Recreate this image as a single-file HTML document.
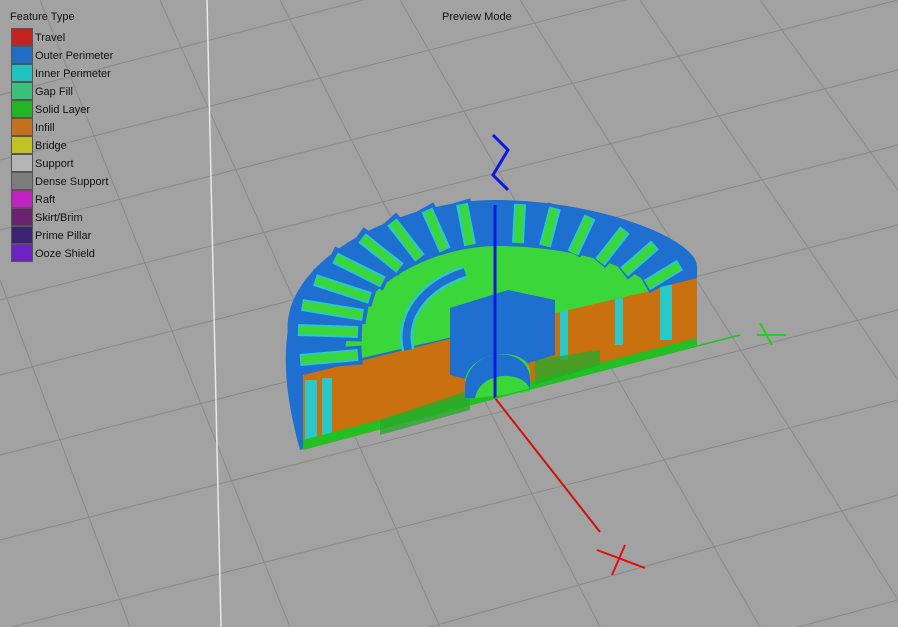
<!DOCTYPE html>
<html style="overflow:hidden"><head><style>
html,body{margin:0;width:898px;height:627px;overflow:hidden}
body{background:#a2a2a2;font-family:"Liberation Sans",sans-serif;position:relative}
svg{position:absolute;left:0;top:0;display:block}
.t{position:absolute;font-size:11px;color:#111;white-space:nowrap}
.sw{position:absolute;left:11px;width:20px;height:16px;border:1px solid #555}
</style></head><body>
<svg width="898" height="627" viewBox="0 0 898 627">
<g stroke="#8a8a8a" stroke-width="1" fill="none">
<line x1="0" y1="95" x2="898" y2="-140"/>
<line x1="0" y1="160" x2="898" y2="-70"/>
<line x1="0" y1="230" x2="898" y2="0"/>
<line x1="0" y1="300" x2="898" y2="70"/>
<line x1="0" y1="375" x2="898" y2="145"/>
<line x1="0" y1="455" x2="898" y2="225"/>
<line x1="0" y1="540" x2="898" y2="310"/>
<line x1="0" y1="630" x2="898" y2="400"/>
<line x1="100" y1="720" x2="898" y2="495"/>
<line x1="380" y1="740" x2="898" y2="600"/>
<line x1="-60" y1="120" x2="130" y2="627"/>
<line x1="40" y1="0" x2="290" y2="627"/>
<line x1="160" y1="0" x2="440" y2="627"/>
<line x1="280" y1="0" x2="600" y2="627"/>
<line x1="400" y1="0" x2="760" y2="627"/>
<line x1="520" y1="0" x2="898" y2="600"/>
<line x1="640" y1="0" x2="898" y2="380"/>
<line x1="760" y1="0" x2="898" y2="190"/>
</g>
<line x1="207" y1="0" x2="221" y2="627" stroke="#e8e8e8" stroke-width="1.5"/>
<path d="M288,330 C283,360 286,400 300,450 L697,345 L697,268 Z" fill="#1f6fd0"/>
<path d="M303,375 L697,278 L697,345 L303,450 Z" fill="#c9700f"/>
<g fill="#2ac8c8">
<rect x="305" y="380" width="12" height="65"/><rect x="322" y="378" width="10" height="62"/>
<rect x="560" y="305" width="8" height="55"/><rect x="660" y="285" width="12" height="55"/><rect x="615" y="295" width="8" height="50"/>
</g>
<path d="M303,440 L697,338 L697,345 L303,450 Z" fill="#22c022"/>
<path d="M380,420 L470,390 L470,410 L380,435Z M535,360 L600,350 L600,365 L535,385Z" fill="#2aaa2a" opacity="0.8"/>
<path d="M288,335 C280,260 400,200 495,200 C600,200 700,240 697,268 L697,278 L303,375 C295,360 290,350 288,335Z" fill="#1f6fd0"/>
<path d="M345,355 C345,295 420,248 495,246 C580,246 640,270 655,290 L345,362 Z" fill="#3ad63a"/>
<g id="fins" stroke-linecap="butt">
<g stroke="#1f6fd0" stroke-width="19">
<line x1="296" y1="360" x2="362" y2="355"/><line x1="294" y1="330" x2="362" y2="332"/><line x1="298" y1="303" x2="367" y2="315"/><line x1="311" y1="278" x2="374" y2="298"/><line x1="331" y1="255" x2="387" y2="282"/><line x1="358" y1="235" x2="404" y2="268"/><line x1="389" y1="219" x2="424" y2="258"/><line x1="425" y1="207" x2="449" y2="250"/><line x1="461" y1="201" x2="474" y2="245"/><line x1="520" y1="201" x2="518" y2="243"/><line x1="557" y1="205" x2="545" y2="246"/><line x1="593" y1="214" x2="572" y2="253"/><line x1="628" y1="227" x2="598" y2="262"/><line x1="659" y1="243" x2="622" y2="272"/><line x1="684" y1="263" x2="645" y2="285"/>
</g>
<g stroke="#2ac8c8" stroke-width="12">
<line x1="300" y1="360" x2="358" y2="355"/><line x1="298" y1="330" x2="358" y2="332"/><line x1="302" y1="305" x2="363" y2="315"/><line x1="315" y1="280" x2="370" y2="298"/><line x1="335" y1="258" x2="383" y2="282"/><line x1="362" y1="238" x2="400" y2="268"/><line x1="392" y1="222" x2="420" y2="258"/><line x1="427" y1="210" x2="445" y2="250"/><line x1="462" y1="204" x2="470" y2="245"/><line x1="520" y1="204" x2="518" y2="243"/><line x1="555" y1="208" x2="545" y2="246"/><line x1="590" y1="217" x2="573" y2="253"/><line x1="625" y1="230" x2="600" y2="262"/><line x1="655" y1="245" x2="624" y2="272"/><line x1="680" y1="265" x2="647" y2="285"/>
</g>
<g stroke="#3ad63a" stroke-width="8">
<line x1="301" y1="360" x2="357" y2="355"/><line x1="299" y1="330" x2="357" y2="332"/><line x1="303" y1="305" x2="362" y2="315"/><line x1="316" y1="280" x2="369" y2="298"/><line x1="336" y1="258" x2="382" y2="282"/><line x1="363" y1="238" x2="399" y2="268"/><line x1="393" y1="222" x2="419" y2="258"/><line x1="428" y1="211" x2="444" y2="250"/><line x1="463" y1="205" x2="470" y2="245"/><line x1="520" y1="205" x2="518" y2="243"/><line x1="554" y1="209" x2="545" y2="246"/><line x1="589" y1="218" x2="573" y2="253"/><line x1="624" y1="231" x2="600" y2="262"/><line x1="654" y1="246" x2="624" y2="272"/><line x1="679" y1="266" x2="647" y2="285"/>
</g>
</g>
<path d="M408,350 C400,315 425,285 465,272" stroke="#2ac8c8" stroke-width="13" fill="none"/>
<path d="M408,350 C400,315 425,285 465,272" stroke="#1f6fd0" stroke-width="8" fill="none"/>
<path d="M450,308 L508,290 L555,300 L555,355 L470,380 L450,375 Z" fill="#1f6fd0"/>
<path d="M465,380 C470,350 525,345 530,370 L530,392 L475,398 Z" fill="#3ad63a"/>
<path d="M465,385 C470,345 530,345 530,380 L530,390 C525,370 480,370 475,398 L465,398Z" fill="#1f6fd0"/>
<line x1="495" y1="205" x2="495" y2="398" stroke="#0b18e0" stroke-width="3"/>
<polyline points="493,135 508,150 493,175 508,190" stroke="#0b18e0" stroke-width="3" fill="none"/>
<line x1="495" y1="398" x2="600" y2="532" stroke="#d01010" stroke-width="2"/>
<line x1="597" y1="550" x2="645" y2="568" stroke="#e01010" stroke-width="2"/>
<line x1="612" y1="575" x2="625" y2="545" stroke="#e01010" stroke-width="2"/>
<line x1="495" y1="398" x2="740" y2="335" stroke="#20c020" stroke-width="1.5"/>
<line x1="757" y1="335" x2="786" y2="335" stroke="#20d020" stroke-width="2"/>
<line x1="760" y1="323" x2="772" y2="345" stroke="#20d020" stroke-width="2"/>
</svg>
<div class="t" style="left:10px;top:11px">Feature Type</div>
<div class="t" style="left:442px;top:11px">Preview Mode</div>
<div class="sw" style="top:28px;background:#c42121"></div><div class="t" style="left:35px;top:32px">Travel</div>
<div class="sw" style="top:46px;background:#1f6ec4"></div><div class="t" style="left:35px;top:50px">Outer Perimeter</div>
<div class="sw" style="top:64px;background:#22c2c2"></div><div class="t" style="left:35px;top:68px">Inner Perimeter</div>
<div class="sw" style="top:82px;background:#3cc07c"></div><div class="t" style="left:35px;top:86px">Gap Fill</div>
<div class="sw" style="top:100px;background:#22b422"></div><div class="t" style="left:35px;top:104px">Solid Layer</div>
<div class="sw" style="top:118px;background:#c6701e"></div><div class="t" style="left:35px;top:122px">Infill</div>
<div class="sw" style="top:136px;background:#c2c222"></div><div class="t" style="left:35px;top:140px">Bridge</div>
<div class="sw" style="top:154px;background:#b4b4b4"></div><div class="t" style="left:35px;top:158px">Support</div>
<div class="sw" style="top:172px;background:#7c7c7c"></div><div class="t" style="left:35px;top:176px">Dense Support</div>
<div class="sw" style="top:190px;background:#c222c2"></div><div class="t" style="left:35px;top:194px">Raft</div>
<div class="sw" style="top:208px;background:#6a2270"></div><div class="t" style="left:35px;top:212px">Skirt/Brim</div>
<div class="sw" style="top:226px;background:#3c2270"></div><div class="t" style="left:35px;top:230px">Prime Pillar</div>
<div class="sw" style="top:244px;background:#6c22c4"></div><div class="t" style="left:35px;top:248px">Ooze Shield</div>
</body></html>
